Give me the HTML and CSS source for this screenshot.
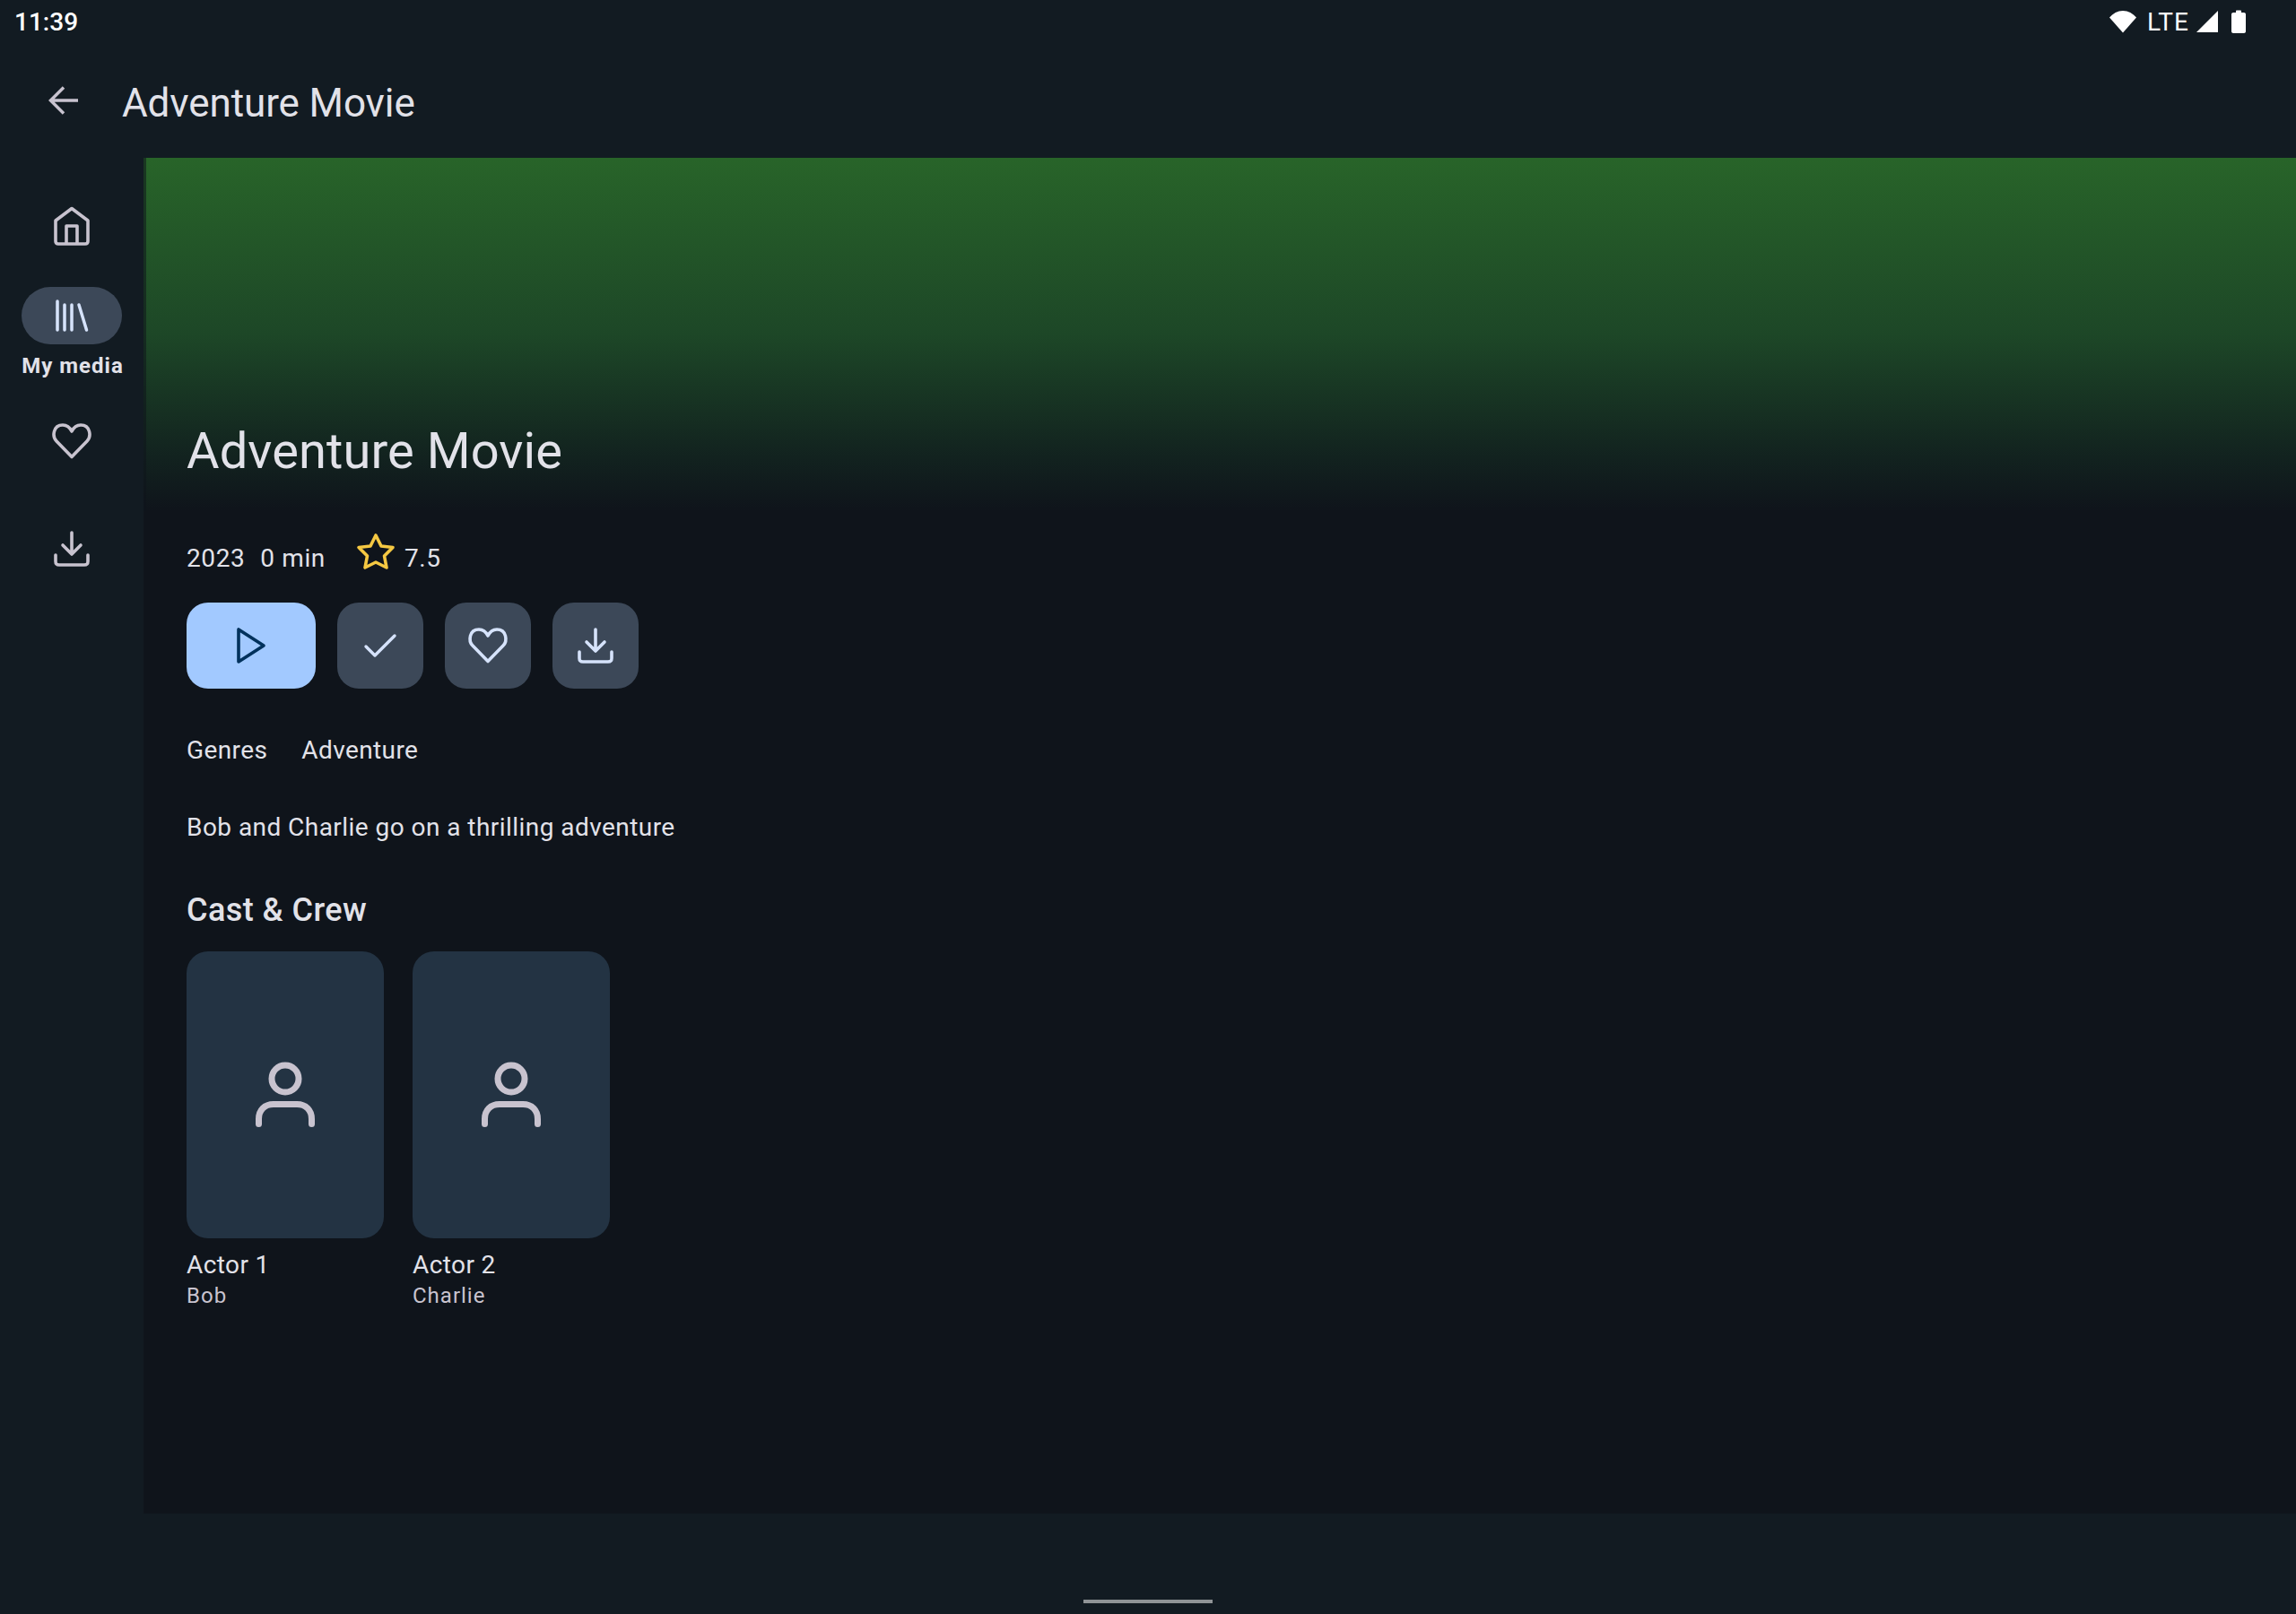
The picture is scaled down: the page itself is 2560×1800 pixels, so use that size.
FILE: index.html
```html
<!DOCTYPE html>
<html lang="en">
<head>
    <meta charset="UTF-8">
    <meta name="viewport" content="width=device-width, initial-scale=1.0">
    <title>Adventure Movie</title>
    <link rel="stylesheet" href="styles.css">
</head>
<body>
    <div class="status-bar">
        <span class="clock">11:39</span>
        <div class="status-icons">
            <svg class="wifi" width="30" height="26" viewBox="0 0 30 26"><path d="M0 8.500C4 4 9 1 15 1S26 4 30 8.500L15 25.500Z" fill="#fff"/></svg>
            <span class="lte">LTE</span>
            <svg class="signal" width="26" height="26" viewBox="0 0 26 26"><path d="M25 1V25H1Z" fill="#fff"/></svg>
            <svg class="battery" width="16" height="26" viewBox="0 0 16 26"><path d="M5 1.500C5 .8 5.500.5 6 .5H10C10.500.5 11 .8 11 1.500V3H14C15 3 16 3.800 16 5V24C16 25 15 26 14 26H2C1 26 0 25 0 24V5C0 3.800 1 3 2 3H5Z" fill="#fff"/></svg>
        </div>
    </div>
    <header class="toolbar">
        <svg class="back" width="48" height="48" viewBox="0 0 48 48" fill="none" stroke="#c8c3cf" stroke-width="3.500"><path d="M39 24H10M23 9.500L8.500 24L23 38.500"/></svg>
        <span class="toolbar-title">Adventure Movie</span>
    </header>
    <div class="layout">
        <nav class="rail">
            <div class="rail-item">
                <svg width="48" height="48" viewBox="0 0 48 48" fill="none" stroke="#c8c3cf" stroke-width="3.600" stroke-linejoin="round"><path d="M24 4.500L42 18V41C42 43 41 44 39 44H9C7 44 6 43 6 41V18Z"/><path d="M18 44V24H30V44"/></svg>
            </div>
            <div class="rail-item active">
                <div class="rail-pill">
                    <svg width="48" height="48" viewBox="0 0 48 48" fill="none" stroke="#d6e3fb" stroke-width="3.500" stroke-linecap="round"><path d="M8 8V40M16 12V40M24 12V40M32 12L40.500 40"/></svg>
                </div>
                <span class="rail-label">My media</span>
            </div>
            <div class="rail-item">
                <svg width="48" height="48" viewBox="0 0 48 48" fill="none" stroke="#c8c3cf" stroke-width="3.600" stroke-linejoin="round"><path d="M24 41.500L7 24C2 19 3 6 14 6C18.500 6 22 9 24 13C26 9 29.500 6 34 6C45 6 46 19 41 24Z"/></svg>
            </div>
            <div class="rail-item">
                <svg width="48" height="48" viewBox="0 0 48 48" fill="none" stroke="#c8c3cf" stroke-width="3.600" stroke-linecap="round" stroke-linejoin="round"><path d="M24 6V29M14 20L24 30L34 20"/><path d="M6 31V38C6 41 7 42 10 42H38C41 42 42 41 42 38V31"/></svg>
            </div>
        </nav>
        <main class="content">
            <div class="hero">
                <h1 class="hero-title">Adventure Movie</h1>
            </div>
            <div class="details">
                <div class="meta">
                    <span>2023</span>
                    <span class="runtime">0 min</span>
                    <svg class="star" width="48" height="48" viewBox="0 0 48 48" fill="none" stroke="#f5c842" stroke-width="3.600" stroke-linejoin="round"><path d="M24 6L30 18L43 19.500L33.500 29L36 42L24 36L12 42L14.500 29L5 19.500L18 18Z"/></svg>
                    <span>7.5</span>
                </div>
                <div class="actions">
                    <button class="btn btn-play">
                        <svg width="48" height="48" viewBox="0 0 48 48" fill="none" stroke="#00315c" stroke-width="3.600" stroke-linejoin="round"><path d="M10 6V42L38 24Z"/></svg>
                    </button>
                    <button class="btn">
                        <svg width="48" height="48" viewBox="0 0 48 48" fill="none" stroke="#d6e3fb" stroke-width="3.400" stroke-linecap="round" stroke-linejoin="round"><path d="M8 25L18 35L40 13"/></svg>
                    </button>
                    <button class="btn">
                        <svg width="48" height="48" viewBox="0 0 48 48" fill="none" stroke="#d6e3fb" stroke-width="3.600" stroke-linejoin="round"><path d="M24 41.500L7 24C2 19 3 6 14 6C18.500 6 22 9 24 13C26 9 29.500 6 34 6C45 6 46 19 41 24Z"/></svg>
                    </button>
                    <button class="btn">
                        <svg width="48" height="48" viewBox="0 0 48 48" fill="none" stroke="#d6e3fb" stroke-width="3.600" stroke-linecap="round" stroke-linejoin="round"><path d="M24 6V29M14 20L24 30L34 20"/><path d="M6 31V38C6 41 7 42 10 42H38C41 42 42 41 42 38V31"/></svg>
                    </button>
                </div>
                <div class="genres">
                    <span>Genres</span>
                    <span>Adventure</span>
                </div>
                <p class="overview">Bob and Charlie go on a thrilling adventure</p>
                <h2 class="section-title">Cast &amp; Crew</h2>
                <div class="cast">
                    <div class="person">
                        <div class="person-photo">
                            <svg width="80" height="80" viewBox="0 0 80 80" fill="none" stroke="#c8c3cf" stroke-width="7" stroke-linecap="round"><circle cx="40" cy="22" r="15"/><path d="M10.500 72.500V67C10.500 57 17 50.500 27 50.500H53C63 50.500 69.500 57 69.500 67V72.500"/></svg>
                        </div>
                        <div class="person-name">Actor 1</div>
                        <div class="person-role">Bob</div>
                    </div>
                    <div class="person">
                        <div class="person-photo">
                            <svg width="80" height="80" viewBox="0 0 80 80" fill="none" stroke="#c8c3cf" stroke-width="7" stroke-linecap="round"><circle cx="40" cy="22" r="15"/><path d="M10.500 72.500V67C10.500 57 17 50.500 27 50.500H53C63 50.500 69.500 57 69.500 67V72.500"/></svg>
                        </div>
                        <div class="person-name">Actor 2</div>
                        <div class="person-role">Charlie</div>
                    </div>
                </div>
            </div>
        </main>
    </div>
    <div class="nav-bar">
        <div class="nav-handle"></div>
    </div>
</body>
</html>
```

FILE: styles.css
```css
* {
    box-sizing: border-box;
}
body {
    width: 2560px;
    height: 1800px;
    margin: 0;
    overflow: hidden;
    background: #121b22;
    color: #e2e2e9;
    font-family: Roboto, 'Liberation Sans', sans-serif;
    display: flex;
    flex-direction: column;
}
svg {
    display: block;
}
.status-bar {
    height: 48px;
    padding: 0 56px 0 16px;
    display: flex;
    align-items: center;
    justify-content: space-between;
    color: #fff;
}
.clock {
    font-size: 28px;
    font-weight: 500;
}
.status-icons {
    display: flex;
    align-items: center;
}
.lte {
    font-size: 28px;
    letter-spacing: 1px;
    margin: 0 7px 0 12px;
}
.signal {
    margin-right: 14px;
}
.toolbar {
    height: 128px;
    padding-left: 48px;
    display: flex;
    align-items: center;
    gap: 40px;
}
.toolbar-title {
    margin-top: 6px;
    font-size: 44px;
    letter-spacing: -0.1px;
}
.layout {
    flex: 1;
    display: flex;
}
.rail {
    width: 160px;
    flex-shrink: 0;
    padding-top: 52px;
    display: flex;
    flex-direction: column;
    align-items: center;
    gap: 44px;
}
.rail-item {
    height: 48px;
    display: flex;
    flex-direction: column;
    align-items: center;
}
.rail-item.active {
    height: 104px;
}
.rail-item:last-child {
    margin-top: 28px;
}
.rail-pill {
    width: 112px;
    height: 64px;
    border-radius: 32px;
    background: #3c4858;
    display: flex;
    align-items: center;
    justify-content: center;
}
.rail-label {
    margin: 8px 0 0 2px;
    font-size: 24px;
    font-weight: 700;
    line-height: 32px;
    letter-spacing: 1px;
    white-space: nowrap;
}
.content {
    flex: 1;
    background: #0f141b;
}
.hero {
    height: 394px;
    padding: 0 0 31px 45px;
    border-left: 3px solid rgba(15, 20, 27, 0.55);
    background: linear-gradient(180deg, #286429 0%, #1d4727 50%, #12221f 85%, #0f141b 100%);
    display: flex;
    align-items: flex-end;
}
.hero-title {
    margin: 0;
    font-size: 56px;
    font-weight: 400;
    line-height: 72px;
    letter-spacing: 0.1px;
}
.details {
    padding: 0 48px;
}
.meta {
    height: 102px;
    padding-top: 2px;
    display: flex;
    align-items: center;
    font-size: 28px;
    letter-spacing: 0.6px;
}
.runtime {
    margin-left: 17px;
}
.star {
    margin: -14px 8px 0 32px;
}
.actions {
    display: flex;
    gap: 24px;
}
.btn {
    width: 96px;
    height: 96px;
    padding: 0;
    border: none;
    border-radius: 24px;
    background: #3c4858;
    display: flex;
    align-items: center;
    justify-content: center;
}
.btn-play {
    width: 144px;
    background: #a2c9ff;
}
.genres {
    margin-top: 49px;
    display: flex;
    gap: 38px;
    font-size: 28px;
    line-height: 40px;
    letter-spacing: 0.4px;
}
.overview {
    margin: 46px 0 0 0;
    font-size: 28px;
    line-height: 40px;
    letter-spacing: 0.45px;
}
.section-title {
    margin: 48px 0 0 0;
    font-size: 36px;
    font-weight: 500;
    line-height: 48px;
    letter-spacing: 0.45px;
}
.cast {
    margin-top: 22px;
    display: flex;
    gap: 32px;
}
.person {
    width: 220px;
}
.person-photo {
    height: 320px;
    border-radius: 24px;
    background: #233343;
    display: flex;
    align-items: center;
    justify-content: center;
}
.person-name {
    margin-top: 10px;
    font-size: 28px;
    line-height: 40px;
    letter-spacing: 0.4px;
}
.person-role {
    margin-top: -2px;
    font-size: 24px;
    line-height: 32px;
    letter-spacing: 1px;
    color: #c8c3cf;
}
.nav-bar {
    height: 112px;
    flex-shrink: 0;
    padding-top: 96px;
    display: flex;
    justify-content: center;
}
.nav-handle {
    width: 144px;
    height: 4px;
    background: #8f9396;
}
```
